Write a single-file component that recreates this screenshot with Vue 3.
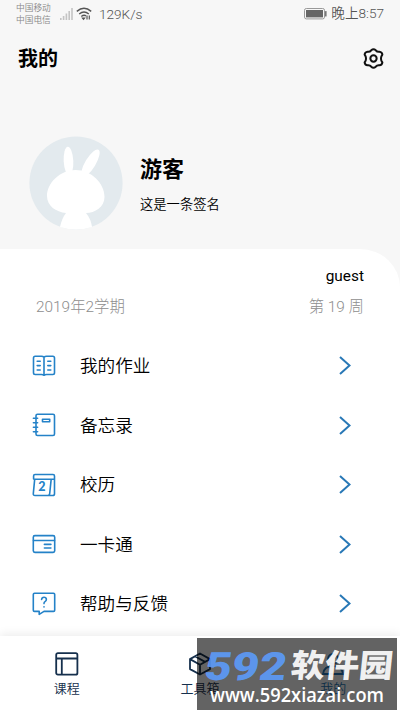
<script setup>
const menu = [
  { id: 'homework', label: '我的作业' },
  { id: 'memo', label: '备忘录' },
  { id: 'calendar', label: '校历' },
  { id: 'card', label: '一卡通' },
  { id: 'help', label: '帮助与反馈' },
]
</script>

<template>
  <main class="screen">
    <header class="status">
      <div class="carriers"><span>中国移动</span><span>中国电信</span></div>
      <svg class="signal" width="13" height="12" viewBox="0 0 13 12" fill="#c4c4c4">
        <path d="M0 10h1.6v2H0zM2.8 8h1.6v4H2.8zM5.6 5.5h1.6V12H5.6zM8.4 3H10v9H8.4zM11.2 0h1.6v12h-1.6z" />
      </svg>
      <svg class="wifi" width="16" height="14" viewBox="0 0 16 14" fill="none" stroke="#555" stroke-width="1.4">
        <path d="M.8 4.4Q8-1.8 15.2 4.4M3.2 7Q8 3 12.8 7M5.3 9.5Q8 7.3 10 8.9" />
        <path d="M6.5 11.2h2L7.5 12.4zM11 8.5v4M13.3 8.5v4" stroke-width="1.2" />
      </svg>
      <span class="speed">129K/s</span>
      <svg class="battery" width="23" height="12" viewBox="0 0 23 12">
        <rect x=".5" y=".5" width="20" height="10.4" rx="1.8" fill="none" stroke="#999" />
        <rect x="2" y="2" width="17" height="7.4" fill="#666" />
        <rect x="21" y="3" width="1.6" height="5.5" rx=".6" fill="#777" />
      </svg>
      <span class="time">晚上8:57</span>
    </header>

    <div class="titlebar">
      <h1>我的</h1>
      <svg width="21" height="21" viewBox="0 0 22 22" fill="none" stroke="#111" stroke-width="2.1" stroke-linejoin="round">
        <path d="M8.6 2.4Q11 .4 13.4 2.4Q14.8 4.3 17.2 3.9Q20 4.2 20.3 6.9Q18.7 9 18.9 11Q18.7 13 20.3 15.1Q20 17.8 17.2 18.1Q14.8 17.7 13.4 19.6Q11 21.6 8.6 19.6Q7.2 17.7 4.8 18.1Q2 17.8 1.7 15.1Q3.3 13 3.1 11Q3.3 9 1.7 6.9Q2 4.2 4.8 3.9Q7.2 4.3 8.6 2.4Z" />
        <circle cx="11" cy="11" r="3.3" />
      </svg>
    </div>

    <section class="profile">
      <svg class="avatar" width="94" height="94" viewBox="0 0 94 94">
        <circle cx="47" cy="47" r="46.6" fill="#e3eaee" />
        <g fill="#fff">
          <ellipse cx="39.5" cy="25" rx="4.8" ry="14.2" transform="rotate(-3 39.5 25)" />
          <ellipse cx="61.5" cy="27" rx="5.2" ry="15.5" transform="rotate(31 61.5 27)" />
          <path d="M46.5 34C62 34 75.5 47 75.5 61C75.5 71 66 77 57 77Q62 83 63 91Q47 96 31 91Q33 82 37 77C27 76 18 70 18 60C18 47 31 34 46.5 34Z" />
        </g>
      </svg>
      <div class="who">
        <h2>游客</h2>
        <p>这是一条签名</p>
      </div>
    </section>

    <section class="panel">
      <div class="guest">guest</div>
      <div class="term"><span>2019年2学期</span><span>第 19 周</span></div>
      <ul class="menu">
        <li v-for="m in menu" :key="m.id">
          <svg class="icon" width="24" height="24" viewBox="0 0 24 24" fill="none" stroke="#2482c8" stroke-width="1.6" stroke-linejoin="round" stroke-linecap="round">
            <template v-if="m.id === 'homework'">
              <path d="M12 3.2Q11 2.3 9.5 2.3H3.2Q1.5 2.3 1.5 4v14.8Q1.5 20.5 3.2 20.5h6.3Q11 20.5 12 21.3Q13 20.5 14.5 20.5h6.3q1.7 0 1.7-1.7V4Q22.5 2.3 20.8 2.3h-6.3Q13 2.3 12 3.2V21" />
              <path d="M5.2 7.2h3M5.2 11.6h3M5.2 16h3M15.8 7.2h3M15.8 11.6h3M15.8 16h3" />
            </template>
            <template v-else-if="m.id === 'memo'">
              <rect x="4" y="1.3" width="18.5" height="21.2" rx="1.5" />
              <path d="M1.4 5.3h4.2M1.4 9.8h4.2M1.4 14.3h4.2M1.4 18.8h4.2" />
              <path d="M10.5 6.2h7.2v2.5h-7.2z" />
            </template>
            <template v-else-if="m.id === 'calendar'">
              <path d="M3 1.5h18q1.5 0 1.5 1.5v17.7q0 1.8-1.8 1.8H3Q1.1 22.5 1.3 20.7L2.7 6.2M1.6 6V3Q1.6 1.5 3 1.5M2 6.2h20M19.2 6.2L17.7 20.5q-.2 2-2 2" />
              <text x="6.2" y="18.3">2</text>
            </template>
            <template v-else-if="m.id === 'card'">
              <rect x="1.3" y="3.6" width="21.4" height="16.8" rx="1.6" />
              <path d="M1.5 8.5h21M12.4 12.4h6.5M12.4 16h6.5" />
            </template>
            <template v-else>
              <path d="M2.5 1.2h19q1.2 0 1.2 1.2v15.8q0 1.2-1.2 1.2H12l-4.8 3v-3H2.5q-1.2 0-1.2-1.2V2.4q0-1.2 1.2-1.2z" />
              <path d="M9.6 7.5Q9.8 5.2 12 5.2t2.4 2.1Q14.4 8.8 13 9.6Q12 10.2 12 11.6M12 14.8v.2" />
            </template>
          </svg>
          <span>{{ m.label }}</span>
          <svg class="chevron" width="12" height="19" viewBox="0 0 12 19" fill="none" stroke="#2878b6" stroke-width="2"><path d="M1 1l9.5 8.5L1 18" /></svg>
        </li>
      </ul>
    </section>

    <nav class="tabs">
      <div class="tab">
        <svg width="24" height="24" viewBox="0 0 24 24" fill="none" stroke="#16304d" stroke-width="1.8"><rect x="1.2" y="1.2" width="21.2" height="21.4" rx="1.7" /><path d="M1.2 6.5h21.2M6.8 6.5v16" /></svg>
        <span>课程</span>
      </div>
      <div class="tab">
        <svg width="24" height="24" viewBox="0 0 24 24" fill="none" stroke="#16304d" stroke-width="1.8" stroke-linejoin="round"><path d="M12 1.5l10 5.6v10L12 22.5 2 17.1v-10zM2 7.1l10 5.6 10-5.6M12 12.7v9.8M7 4.3l10 5.6" /></svg>
        <span>工具箱</span>
      </div>
      <div class="tab active">
        <svg width="24" height="24" viewBox="0 0 24 24" fill="none" stroke="#2878b6" stroke-width="1.8"><circle cx="12" cy="7" r="5" /><path d="M2 22q1-8 10-8t10 8z" /></svg>
        <span>我的</span>
      </div>
    </nav>

    <aside class="watermark">
      <svg width="200" height="72" viewBox="0 0 200 72">
        <text class="digits" transform="translate(6 42) skewX(-8)" textLength="82" lengthAdjust="spacingAndGlyphs">592</text>
        <text class="brand" transform="translate(93 39) skewX(-6)" textLength="102" lengthAdjust="spacingAndGlyphs">软件园</text>
        <text class="url" x="13" y="64" textLength="174" lengthAdjust="spacingAndGlyphs">www.592xiazai.com</text>
      </svg>
    </aside>
  </main>
</template>

<style>
body { margin: 0; }
</style>
<style scoped>
* { box-sizing: border-box; }
.screen { position: relative; width: 400px; height: 711px; overflow: hidden; display: flex; flex-direction: column; background: #f7f7f7; color: #000; font-family: Roboto, "Noto Sans CJK SC", sans-serif; }
svg { display: block; flex: none; }
.status { height: 28px; display: flex; align-items: center; padding: 0 16px; color: #555; }
.carriers { display: flex; flex-direction: column; width: 44px; font-size: 8.7px; line-height: 12px; color: #888; font-weight: 350; }
.signal { margin-top: -1px; }
.wifi { margin-left: 3px; }
.speed { margin-left: 7px; font-size: 13.6px; font-weight: 350; }
.battery { margin-left: auto; }
.time { margin-left: 4px; font-size: 13.6px; line-height: 20px; margin-top: -2px; font-weight: 350; white-space: nowrap; }
.titlebar { height: 60px; display: flex; align-items: center; justify-content: space-between; padding: 0 16px 0 18px; }
h1, h2, p, ul { margin: 0; padding: 0; }
h1 { font-size: 20px; line-height: 30px; padding-top: 2px; }
.profile { height: 161px; display: flex; padding: 48px 0 0 29px; }
.who { margin-left: 17px; padding-top: 19px; }
h2 { font-size: 22px; line-height: 30px; }
p { margin-top: 10px; font-size: 13.3px; line-height: 20px; font-weight: 350; }
.panel { flex: 1; background: #fff; border-top-right-radius: 40px 38px; padding-top: 16px; }
.guest { padding-right: 36px; text-align: right; font-size: 15.4px; line-height: 22px; }
.term { display: flex; justify-content: space-between; margin-top: 9px; padding: 0 36px; color: #8e8e8e; font-size: 15.4px; line-height: 22px; font-weight: 300; }
.menu { list-style: none; margin-top: 18px; }
.menu li { height: 59.5px; display: flex; align-items: center; padding: 0 49px 0 32px; font-size: 17.6px; font-weight: 350; }
.menu span { margin: -2px 0 0 24px; }
.chevron { margin-left: auto; }
.icon text { font: 900 12.5px Lato, sans-serif; fill: #2482c8; stroke: none; }
.tabs { height: 75px; display: flex; background: #fff; box-shadow: 0 -2px 9px rgba(0, 0, 0, .08); z-index: 1; }
.tab { flex: 1; display: flex; flex-direction: column; align-items: center; padding-top: 16px; font-size: 13px; line-height: 20px; color: #16304d; font-weight: 350; }
.tab span { margin-top: 3px; }
.active { color: #2878b6; }
.watermark { position: absolute; z-index: 2; left: 197px; top: 638px; width: 200px; height: 72px; background: rgba(0, 0, 0, .61); }
.digits { font: 900 39px Roboto, sans-serif; fill: #5c9dff; fill-opacity: .9; }
.brand { font: 900 32px "Noto Sans CJK SC", sans-serif; fill: #fff; fill-opacity: .93; }
.url { font: 600 20.5px "Open Sans", sans-serif; fill: #fff; }
</style>
